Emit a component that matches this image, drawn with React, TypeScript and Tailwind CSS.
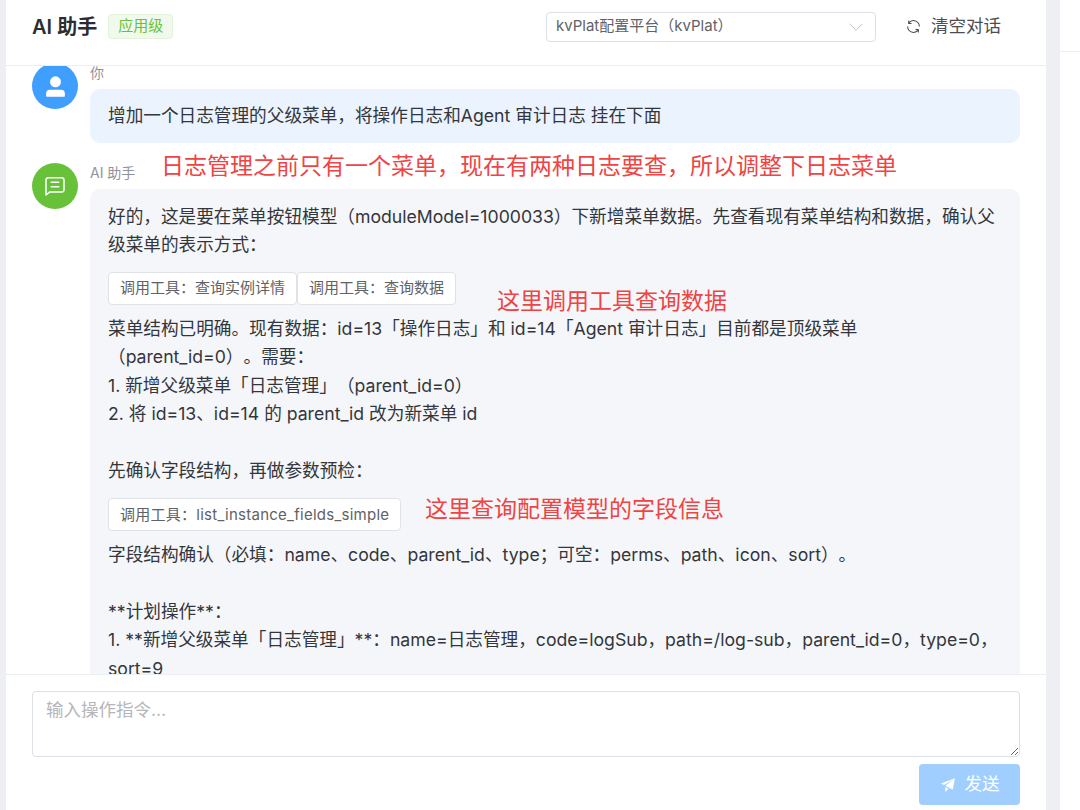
const font = { fontFamily: '"Inter", "Noto Sans CJK SC", sans-serif' };

function Tool({ children, wide }: { children: string; wide?: boolean }) {
  return (
    <span className={`inline-flex h-[33px] items-center whitespace-nowrap rounded-[4px] border border-[#e0e2e7] bg-white px-[11px] text-[15px] text-[#606266] ${wide ? "tracking-[0.26px]" : ""}`}>
      {children}
    </span>
  );
}

function Note({ className, children }: { className: string; children: string }) {
  return (
    <div className={`absolute whitespace-nowrap text-[23px] leading-[30px] text-[#ef4444] ${className}`}>{children}</div>
  );
}

function UserFilled() {
  return (
    <svg viewBox="0 0 1024 1024" className="h-[25px] w-[25px]" fill="currentColor">
      <path d="M288 320a224 224 0 1 0 448 0 224 224 0 1 0-448 0m544 608H160a32 32 0 0 1-32-32v-96a160 160 0 0 1 160-160h448a160 160 0 0 1 160 160v96a32 32 0 0 1-32 32z" />
    </svg>
  );
}

function ChatSquare() {
  return (
    <svg viewBox="0 0 1024 1024" className="h-[24px] w-[24px]" fill="currentColor">
      <path d="M160 826.88 273.536 736H800a64 64 0 0 0 64-64V256a64 64 0 0 0-64-64H224a64 64 0 0 0-64 64zM296 800 147.968 918.4A32 32 0 0 1 96 893.44V256a128 128 0 0 1 128-128h576a128 128 0 0 1 128 128v416a128 128 0 0 1-128 128z" />
      <path d="M352 512h320q32 0 32 32t-32 32H352q-32 0-32-32t32-32M352 320h320q32 0 32 32t-32 32H352q-32 0-32-32t32-32" />
    </svg>
  );
}

function Refresh() {
  return (
    <svg viewBox="0 0 1024 1024" className="h-[17px] w-[17px]" fill="currentColor">
      <path d="M771.776 794.88A384 384 0 0 1 128 512h64a320 320 0 0 0 555.712 216.448H654.72a32 32 0 1 1 0-64h149.056a32 32 0 0 1 32 32v148.928a32 32 0 1 1-64 0v-50.56zM276.288 295.616h92.992a32 32 0 0 1 0 64H220.16a32 32 0 0 1-32-32V178.56a32 32 0 0 1 64 0v50.56A384 384 0 0 1 896.128 512h-64a320 320 0 0 0-555.776-216.384z" />
    </svg>
  );
}

function Promotion() {
  return (
    <svg viewBox="0 0 1024 1024" className="h-[17px] w-[17px]" fill="currentColor">
      <path d="m64 448 832-320-128 704-446.08-243.328L832 192 242.816 545.472zm256 512V657.024L512 768z" />
    </svg>
  );
}

function Chevron() {
  return (
    <svg viewBox="0 0 20 20" className="ml-auto h-[18px] w-[18px] text-[#b8bbc2]" fill="none" stroke="currentColor" strokeWidth="1">
      <path d="M3 6.5 10 13.5 17 6.5" />
    </svg>
  );
}

export default function App() {
  return (
    <div className="flex h-[810px] w-[1080px] overflow-hidden bg-white [text-spacing-trim:space-all]" style={font}>
      <div className="w-[6px] bg-[#eeeff2]" />
      <main className="relative flex w-[1040px] flex-col bg-white">
        <header className="flex h-[66px] shrink-0 items-center border-b border-[#eceef1] pb-[12px] pl-[26px] pr-[45px]">
          <h1 className="text-[20px] font-semibold text-[#2b2d31]">AI 助手</h1>
          <span className="ml-[11px] flex h-[25px] items-center rounded-[4px] border border-[#e1f3d8] bg-[#f0f9eb] px-[9px] text-[15px] text-[#67c23a]">
            应用级
          </span>
          <div className="ml-auto flex h-[30px] w-[330px] items-center rounded-[4px] border border-[#dcdfe6] pl-[9px] pr-[10px] text-[15px] text-[#606266]">
            <span>kvPlat配置平台（kvPlat）</span>
            <Chevron />
          </div>
          <div className="ml-[29px] flex items-center gap-[9px] text-[17.5px] text-[#4c4e52]">
            <Refresh />
            <span>清空对话</span>
          </div>
        </header>

        <section className="flex min-h-0 flex-1 flex-col overflow-hidden pl-[26px] pr-[26px] text-[17.65px] leading-[28.4px] text-[#33363b]">
          <div className="flex gap-[12px]">
            <div className="-mt-[3px] flex h-[46px] w-[46px] shrink-0 items-center justify-center rounded-full bg-[#409eff] text-white">
              <UserFilled />
            </div>
            <div className="min-w-0 flex-1">
              <div className="h-[23px] text-[14px] leading-[14px] text-[#909399]">你</div>
              <div className="flex h-[54px] items-center rounded-[10px] bg-[#ebf3fe] px-[18px] pt-[1px]">
                增加一个日志管理的父级菜单，将操作日志和Agent 审计日志 挂在下面
              </div>
            </div>
          </div>

          <div className="mt-[20px] flex gap-[12px]">
            <div className="flex h-[46px] w-[46px] shrink-0 items-center justify-center rounded-full bg-[#67c23a] text-white">
              <ChatSquare />
            </div>
            <div className="min-w-0 flex-1">
              <div className="h-[26px] text-[14px] leading-[20px] text-[#909399]">AI 助手</div>
              <div className="rounded-t-[10px] bg-[#f5f6fa] px-[18px] pt-[14px] pb-[100px]">
                <p>好的，这是要在菜单按钮模型（moduleModel=1000033）下新增菜单数据。先查看现有菜单结构和数据，确认父级菜单的表示方式：</p>
                <div className="mt-[12px] flex">
                  <Tool>调用工具：查询实例详情</Tool>
                  <Tool>调用工具：查询数据</Tool>
                </div>
                <p className="mt-[10px]">菜单结构已明确。现有数据：id=13「操作日志」和 id=14「Agent 审计日志」目前都是顶级菜单<br />（parent_id=0）。需要：</p>
                <p>1. 新增父级菜单「日志管理」（parent_id=0）</p>
                <p>2. 将 id=13、id=14 的 parent_id 改为新菜单 id</p>
                <p className="mt-[28.4px]">先确认字段结构，再做参数预检：</p>
                <div className="mt-[13px] flex">
                  <Tool wide>调用工具：list_instance_fields_simple</Tool>
                </div>
                <p className="mt-[10px]">字段结构确认（必填：name、code、parent_id、type；可空：perms、path、icon、sort）。</p>
                <p className="mt-[28.4px]">**计划操作**：</p>
                <p>1. **新增父级菜单「日志管理」**：name=日志管理，code=logSub，path=/log-sub，parent_id=0，type=0，sort=9</p>
              </div>
            </div>
          </div>
        </section>

        <footer className="z-10 h-[136px] shrink-0 border-t border-[#eceef1] bg-white px-[26px] pt-[16px]">
          <textarea
            readOnly
            placeholder="输入操作指令..."
            className="block h-[66px] w-[988px] rounded-[4px] border border-[#dcdfe6] px-[13px] py-[5px] text-[17.5px] leading-[26px] outline-none placeholder:text-[#b4b6bb]"
          />
          <div className="mt-[7px] flex justify-end">
            <button className="flex h-[41px] w-[101px] items-center justify-center gap-[8px] rounded-[4px] bg-[#a0cfff] text-[17.5px] text-white">
              <Promotion />
              发送
            </button>
          </div>
        </footer>

        <Note className="left-[155px] top-[151px]">日志管理之前只有一个菜单，现在有两种日志要查，所以调整下日志菜单</Note>
        <Note className="left-[491px] top-[286px]">这里调用工具查询数据</Note>
        <Note className="left-[419px] top-[494px]">这里查询配置模型的字段信息</Note>
      </main>
      <div className="w-[14px] bg-[#eeeff2]" />
      <div className="flex-1">
        <div className="h-[52px] border-b border-[#eceef1]" />
      </div>
    </div>
  );
}
